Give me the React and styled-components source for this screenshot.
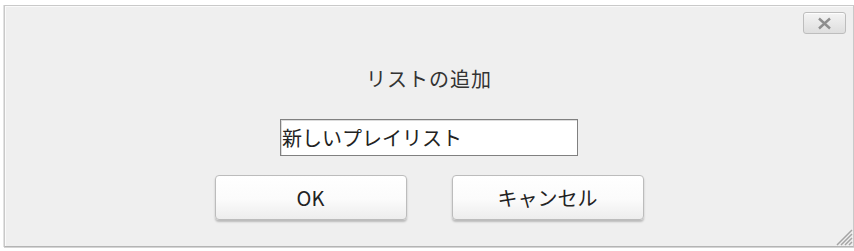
import React from 'react';
import styled, { createGlobalStyle } from 'styled-components';

const GlobalStyle = createGlobalStyle`
  html, body {
    margin: 0;
    padding: 0;
    background: #ffffff;
    overflow: hidden;
  }
  body {
    font-family: "Noto Sans CJK JP", "Noto Sans", sans-serif;
  }
`;

const Page = styled.div`
  width: 854px;
  height: 251px;
  padding: 5px 0 0 4px;
  box-sizing: border-box;
`;

const Dialog = styled.div`
  position: relative;
  width: 850px;
  height: 242px;
  box-sizing: border-box;
  background: #efefef;
  border: 1px solid #c9c9c9;
  border-bottom-color: #b4b4b4;
  box-shadow: inset 1px 1px 0 #fafafa, -1px 0 0 #e2e2e2, 0 1px 0 #d4d4d4;
  display: flex;
  flex-direction: column;
  align-items: center;
`;

const Header = styled.div`
  align-self: stretch;
  display: flex;
  justify-content: flex-end;
  padding: 6px 7px 0 0;
`;

const CloseButton = styled.button`
  width: 43px;
  height: 22px;
  padding: 0;
  display: flex;
  align-items: center;
  justify-content: center;
  border: 1px solid #bdbdbd;
  border-radius: 3px;
  background: linear-gradient(#f4f4f4, #dedede);
  box-shadow: inset 0 1px 0 #fdfdfd;
  cursor: pointer;
`;

const Title = styled.div`
  margin-top: 33px;
  font-size: 20px;
  line-height: 24px;
  color: #333;
  letter-spacing: 1px;
`;

const NameInput = styled.input`
  margin-top: 28px;
  width: 298px;
  height: 37px;
  box-sizing: border-box;
  padding: 0 1px;
  border: 1px solid #808080;
  box-shadow: inset 1px 1px 0 #dcdcdc;
  background: #fff;
  font-family: "Noto Sans CJK JP", sans-serif;
  font-size: 20px;
  color: #222;
  outline: none;
`;

const ButtonRow = styled.div`
  margin-top: 19px;
  display: flex;
  gap: 45px;
`;

const ActionButton = styled.button`
  width: 192px;
  height: 45px;
  border: 1px solid #bcbcbc;
  border-radius: 4px;
  background: linear-gradient(#ffffff 0%, #fbfbfb 55%, #ededed 100%);
  box-shadow: 0 2px 2px rgba(0, 0, 0, 0.22);
  font-family: "Noto Sans CJK JP", sans-serif;
  font-size: 20px;
  color: #222;
  cursor: pointer;
`;

const Grip = styled.svg`
  position: absolute;
  right: 0;
  bottom: 0;
`;

export default function App() {
  return (
    <>
      <GlobalStyle />
      <Page>
        <Dialog>
          <Header>
            <CloseButton aria-label="close">
              <svg width="15" height="13" viewBox="0 0 15 13">
                <path d="M2 1.5 L13 11.5 M13 1.5 L2 11.5" stroke="#8e8e8e" strokeWidth="2.4" />
              </svg>
            </CloseButton>
          </Header>
          <Title>リストの追加</Title>
          <NameInput defaultValue="新しいプレイリスト" />
          <ButtonRow>
            <ActionButton>OK</ActionButton>
            <ActionButton>キャンセル</ActionButton>
          </ButtonRow>
          <Grip width="20" height="20" viewBox="0 0 20 20">
            <path d="M19 4 L4 19 M19 8 L8 19 M19 12 L12 19 M19 16 L16 19" stroke="#a4a4a4" strokeWidth="1.5" />
          </Grip>
        </Dialog>
      </Page>
    </>
  );
}
